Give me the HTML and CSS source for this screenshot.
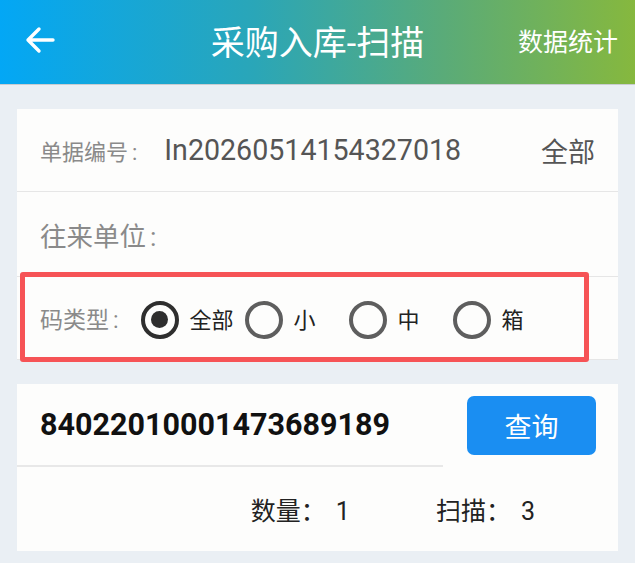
FILE: index.html
```html
<!DOCTYPE html>
<html lang="zh-CN">
<head>
<meta charset="utf-8">
<title>采购入库-扫描</title>
<link rel="stylesheet" href="styles.css">
</head>
<body>
<header class="topbar">
  <span class="back">
    <svg width="32" height="28" viewBox="0 0 32 28"><path d="M29 14H4M15 3L4 14l11 11" fill="none" stroke="#fff" stroke-width="3.4" stroke-linecap="round" stroke-linejoin="round"/></svg>
  </span>
  <h1 class="title">采购入库-扫描</h1>
  <span class="stats">数据统计</span>
</header>

<main class="content">
  <section class="card">
    <div class="row row-doc">
      <span class="label">单据编号<span class="colon">:</span></span>
      <span class="value">In20260514154327018</span>
      <span class="filter">全部</span>
    </div>
    <div class="row row-partner">
      <span class="label label-lg">往来单位<span class="colon">:</span></span>
    </div>
    <div class="row row-type">
      <span class="label label-md">码类型<span class="colon">:</span></span>
      <div class="options">
        <label class="opt"><span class="radio checked"></span><span class="opt-text">全部</span></label>
        <label class="opt"><span class="radio"></span><span class="opt-text">小</span></label>
        <label class="opt"><span class="radio"></span><span class="opt-text">中</span></label>
        <label class="opt"><span class="radio"></span><span class="opt-text">箱</span></label>
      </div>
    </div>
    <div class="highlight"></div>
  </section>

  <section class="card">
    <div class="row-scan">
      <div class="code">84022010001473689189</div>
      <button class="query">查询</button>
    </div>
    <div class="row-count">
      <span class="count">数量：<span class="num">1</span></span>
      <span class="count">扫描：<span class="num">3</span></span>
    </div>
  </section>
</main>
</body>
</html>
```

FILE: styles.css
```css
* { box-sizing: border-box; }
html, body { margin: 0; padding: 0; }
body {
  width: 635px;
  height: 563px;
  overflow: hidden;
  background: #eaeff4;
  font-family: "Roboto", "Noto Sans CJK SC", sans-serif;
}

.topbar {
  height: 85px;
  display: flex;
  align-items: center;
  background: linear-gradient(to right, #03a7f5 0%, #2aa6b8 40%, #5aab78 70%, #86b83e 100%);
  border-bottom: 1px solid #c9ccd0;
}
.back {
  width: 120px;
  padding-left: 24px;
  display: flex;
  align-items: center;
  height: 100%;
  margin-top: -4px;
}
.title {
  flex: 1;
  margin: -4px 0 0;
  text-align: center;
  color: #fff;
  font-weight: 400;
  font-size: 34px;
}
.stats {
  width: 120px;
  text-align: right;
  padding-right: 17px;
  color: #fff;
  font-size: 25px;
  margin-top: -4px;
  white-space: nowrap;
}

.content {
  padding: 24px 17px 0;
  display: flex;
  flex-direction: column;
  gap: 24px;
}
.card {
  background: #fdfdfc;
  position: relative;
}

.row {
  display: flex;
  align-items: center;
  padding: 0 23px;
  border-bottom: 1px solid #e6e6e6;
}
.row:last-of-type { border-bottom: none; }
.row-doc { height: 83px; }
.row-partner { height: 85px; }
.row-type { height: 83px; }

.label {
  color: #8a8a8a;
  font-size: 22px;
}
.colon { margin-left: 4px; }
.label-lg { font-size: 26.5px; }
.label-md { font-size: 23px; }
.value {
  margin-left: 27px;
  color: #555;
  font-size: 28.6px;
  flex: 1;
}
.filter {
  color: #555;
  font-size: 27px;
}

.options {
  display: flex;
  align-items: center;
  gap: 11px;
  margin-left: 22px;
}
.opt {
  display: flex;
  align-items: center;
  gap: 11px;
}
.radio {
  width: 38px;
  height: 38px;
  border-radius: 50%;
  border: 4px solid #5e5e5e;
  display: flex;
  align-items: center;
  justify-content: center;
  margin-top: 3px;
}
.radio.checked { border-color: #2e2e2e; }
.radio.checked::after {
  content: "";
  width: 17px;
  height: 17px;
  border-radius: 50%;
  background: #2e2e2e;
}
.opt-text {
  min-width: 44px;
  color: #222;
  font-size: 22px;
}

.highlight {
  position: absolute;
  left: 3px;
  right: 29px;
  top: 163px;
  height: 90px;
  border: 5px solid #f65356;
  border-radius: 3px;
}

.row-scan {
  height: 83px;
  display: flex;
  align-items: center;
}
.code {
  width: 426px;
  height: 83px;
  padding-left: 23px;
  display: flex;
  align-items: center;
  border-bottom: 2px solid #e8e8e8;
  font-size: 30.5px;
  font-weight: 700;
  color: #111;
  white-space: nowrap;
}
.query {
  margin-left: 24px;
  width: 129px;
  height: 59px;
  border: none;
  border-radius: 7px;
  background: #1a8ef2;
  color: #fff;
  font-family: "Noto Sans CJK SC", sans-serif;
  font-size: 27px;
  padding: 0;
}

.row-count {
  height: 84px;
  display: flex;
  align-items: center;
  justify-content: flex-end;
  gap: 86px;
  padding-right: 83px;
}
.count {
  color: #222;
  font-size: 25px;
}
.num { margin-left: 10px; }
```
